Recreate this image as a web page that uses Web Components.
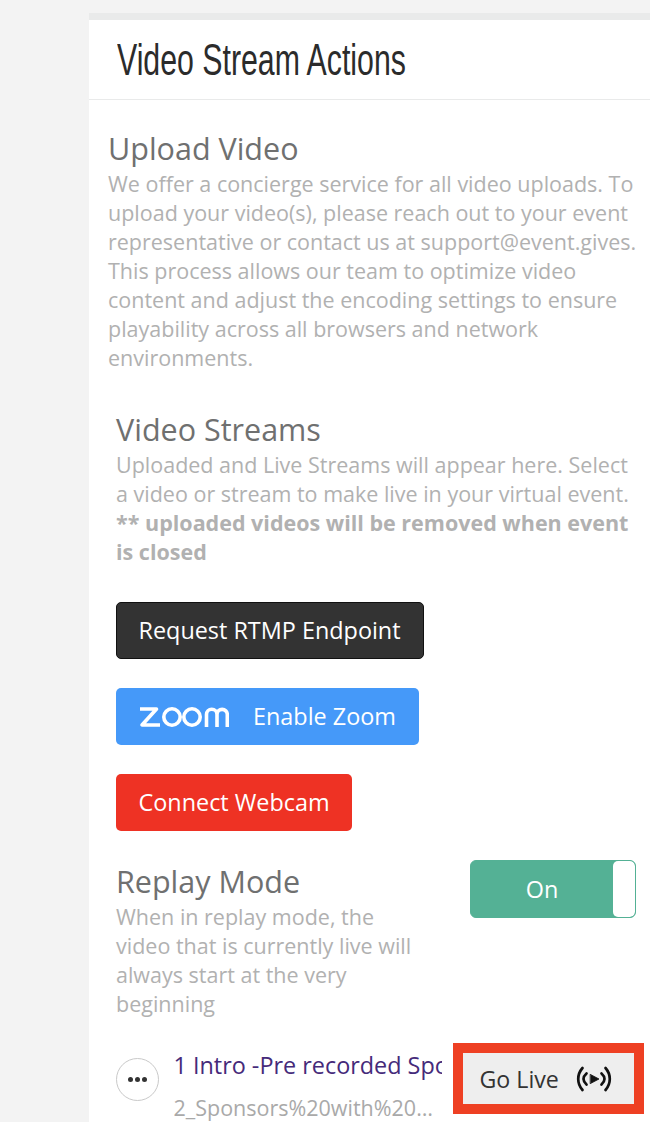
<!DOCTYPE html>
<html>
<head>
<meta charset="utf-8">
<title>Video Stream Actions</title>
<style>
  html, body { margin: 0; height: 1122px; overflow: hidden; }
  body { background: #f3f3f3; font-family: "Open Sans", sans-serif; }
</style>
</head>
<body>
<stream-panel>
  <panel-header slot="header">Video Stream Actions</panel-header>

  <info-block style="padding: 28px 10px 0 19px">
    <span slot="title">Upload Video</span>
    We offer a concierge service for all video uploads. To upload your video(s), please reach out to your event representative or contact us at support@event.gives. This process allows our team to optimize video content and adjust the encoding settings to ensure playability across all browsers and network environments.
  </info-block>

  <info-block style="padding: 37px 14px 0 27px">
    <span slot="title">Video Streams</span>
    Uploaded and Live Streams will appear here. Select a video or stream to make live in your virtual event. <b>** uploaded videos will be removed when event is closed</b>
  </info-block>

  <action-button variant="dark" style="margin: 36px 0 0 27px">Request RTMP Endpoint</action-button>
  <action-button variant="zoom" style="margin: 29px 0 0 27px">Enable Zoom</action-button>
  <action-button variant="red" style="margin: 29px 0 0 27px">Connect Webcam</action-button>

  <replay-mode></replay-mode>
  <video-row title-text="1 Intro -Pre recorded Sponsors" file="2_Sponsors%20with%20Logos.mp4"></video-row>
</stream-panel>
<go-live-callout></go-live-callout>

<script>
class StreamPanel extends HTMLElement {
    connectedCallback() {
        const shadow = this.attachShadow({ mode: "open" });
        shadow.innerHTML = `
            <style>
                :host {
                    display: block;
                    margin: 13px 0 0 89px;
                    border-top: 7px solid #e9eaea;
                    background: #fff;
                    height: 1102px;
                    overflow: hidden;
                }
            </style>
            <slot name="header"></slot>
            <slot></slot>
        `;
    }
}

class PanelHeader extends HTMLElement {
    connectedCallback() {
        const shadow = this.attachShadow({ mode: "open" });
        shadow.innerHTML = `
            <style>
                :host {
                    display: block;
                    height: 79px;
                    border-bottom: 1px solid #e9eaea;
                    padding-left: 27.5px;
                    overflow: hidden;
                }
                h2 {
                    margin: 0;
                    font: 400 44px/79px "Liberation Sans", sans-serif;
                    color: #2b2b2b;
                    white-space: nowrap;
                    transform: scaleX(.688);
                    transform-origin: left center;
                }
            </style>
            <h2><slot></slot></h2>
        `;
    }
}

class InfoBlock extends HTMLElement {
    connectedCallback() {
        const shadow = this.attachShadow({ mode: "open" });
        shadow.innerHTML = `
            <style>
                :host {
                    display: block;
                }
                h3 {
                    margin: 0 0 1px;
                    font-weight: 400;
                    font-size: 30.5px;
                    line-height: 40px;
                    color: #6f7070;
                }
                p {
                    margin: 0;
                    font-size: 21.5px;
                    line-height: 29px;
                    color: #b1b1b1;
                }
            </style>
            <h3><slot name="title"></slot></h3>
            <p><slot></slot></p>
        `;
    }
}

const ZOOM_LOGO = `
    <svg width="90" height="20" viewBox="0 0 90 20" fill="none" stroke="#fff" stroke-width="3.600">
        <path d="M1 2h16.500L3 18h18" stroke-linejoin="round"/>
        <circle cx="33" cy="10" r="8.200"/>
        <circle cx="53" cy="10" r="8.200"/>
        <path d="M67.500 20V7.500a5.250 5.250 0 0 1 10.500 0V20M78 7.500a5.150 5.150 0 0 1 10.300 0V20"/>
    </svg>`;

class ActionButton extends HTMLElement {
    connectedCallback() {
        const shadow = this.attachShadow({ mode: "open" });
        const variant = this.getAttribute("variant");
        shadow.innerHTML = `
            <style>
                :host {
                    display: block;
                    width: fit-content;
                }
                button {
                    display: flex;
                    align-items: center;
                    gap: 24px;
                    height: 57px;
                    box-sizing: border-box;
                    padding: 0 23px 2px;
                    border: 0;
                    border-radius: 5px;
                    color: #fff;
                    font: 400 23.4px "Open Sans", sans-serif;
                    white-space: nowrap;
                }
                .dark { background: #333; border: 1px solid #111; padding: 0 22.5px 2px 21.5px; }
                .zoom { background: #4599f9; }
                .zoom svg { margin-top: 2px; }
                .red { background: #ee3224; padding: 0 22.5px 2px; }
            </style>
            <button class="${variant}">${variant == "zoom" ? ZOOM_LOGO : ""}<slot></slot></button>
        `;
    }
}

class ReplayMode extends HTMLElement {
    connectedCallback() {
        const shadow = this.attachShadow({ mode: "open" });
        shadow.innerHTML = `
            <style>
                :host {
                    display: flex;
                    justify-content: space-between;
                    align-items: flex-start;
                    margin-top: 30px;
                    padding: 0 14px 0 27px;
                }
                .copy { width: 305px; }
                h3 {
                    margin: 0 0 1px;
                    font-weight: 400;
                    font-size: 30.5px;
                    line-height: 40px;
                    color: #6f7070;
                }
                p {
                    margin: 0;
                    font-size: 21.5px;
                    line-height: 29px;
                    color: #b1b1b1;
                }
                .toggle {
                    display: flex;
                    width: 166px;
                    height: 58px;
                    margin-top: -1px;
                    box-sizing: border-box;
                    background: #54b195;
                    border: 1px solid #54b195;
                    border-radius: 6px;
                    color: #fff;
                    font-size: 23.4px;
                    overflow: hidden;
                }
                .label {
                    flex: 1;
                    display: flex;
                    align-items: center;
                    justify-content: center;
                }
                .knob {
                    width: 22px;
                    background: #fff;
                    border-radius: 5px;
                }
            </style>
            <div class="copy">
                <h3>Replay Mode</h3>
                <p>When in replay mode, the video that is currently live will always start at the very beginning</p>
            </div>
            <div class="toggle"><span class="label">On</span><span class="knob"></span></div>
        `;
    }
}

class VideoRow extends HTMLElement {
    connectedCallback() {
        const shadow = this.attachShadow({ mode: "open" });
        shadow.innerHTML = `
            <style>
                :host {
                    display: flex;
                    gap: 14.5px;
                    margin-top: 30px;
                    padding-left: 27px;
                }
                .more {
                    flex: none;
                    display: flex;
                    align-items: center;
                    justify-content: center;
                    gap: 2px;
                    width: 43px;
                    height: 43px;
                    margin-top: 10px;
                    box-sizing: border-box;
                    border: 1px solid #c9c9c9;
                    border-radius: 50%;
                }
                .more i {
                    width: 5px;
                    height: 5px;
                    border-radius: 50%;
                    background: #333;
                }
                .text { width: 268.5px; overflow: hidden; }
                .name {
                    font-size: 23.4px;
                    line-height: 34px;
                    color: #452a7a;
                    white-space: nowrap;
                }
                .file {
                    margin-top: 11px;
                    width: 263px;
                    font-size: 21.5px;
                    line-height: 29px;
                    color: #a9a9a9;
                    white-space: nowrap;
                    overflow: hidden;
                    text-overflow: ellipsis;
                }
            </style>
            <div class="more"><i></i><i></i><i></i></div>
            <div class="text">
                <div class="name">${this.getAttribute("title-text")}</div>
                <div class="file">${this.getAttribute("file")}</div>
            </div>
        `;
    }
}

class GoLiveCallout extends HTMLElement {
    connectedCallback() {
        const shadow = this.attachShadow({ mode: "open" });
        shadow.innerHTML = `
            <style>
                :host {
                    position: absolute;
                    left: 453px;
                    top: 1043px;
                    width: 191px;
                    height: 71px;
                    box-sizing: border-box;
                    border: 10px solid #ee4023;
                    background: #eee;
                    display: flex;
                    align-items: center;
                    padding-left: 16.5px;
                    gap: 17.5px;
                    color: #333;
                    font-size: 23.2px;
                }
                svg { display: block; }
            </style>
            <span>Go Live</span>
            <svg width="36" height="26" viewBox="0 0 36 26" fill="none" stroke="#111" stroke-width="2.700" stroke-linecap="round">
                <path d="M6.500 2C.8 8.500 .8 17.500 6.500 24M29.500 2C35.200 8.500 35.200 17.500 29.500 24"/>
                <path d="M10.500 7.500C6.500 11 6.500 15 10.500 18.500M25.500 7.500C29.500 11 29.500 15 25.500 18.500"/>
                <path d="M14.500 8.500L23 13L14.500 17.500Z" fill="#111" stroke="#111" stroke-width=".8" stroke-linejoin="round"/>
            </svg>
        `;
    }
}

customElements.define("stream-panel", StreamPanel);
customElements.define("panel-header", PanelHeader);
customElements.define("info-block", InfoBlock);
customElements.define("action-button", ActionButton);
customElements.define("replay-mode", ReplayMode);
customElements.define("video-row", VideoRow);
customElements.define("go-live-callout", GoLiveCallout);
</script>
</body>
</html>
